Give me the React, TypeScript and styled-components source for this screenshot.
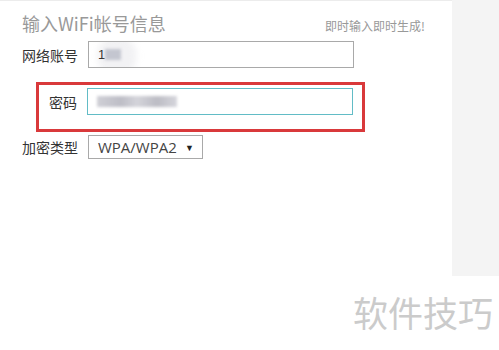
import React from 'react';
import styled, { createGlobalStyle } from 'styled-components';

const GlobalStyle = createGlobalStyle`
  html, body {
    margin: 0;
    padding: 0;
    background: #fff;
  }
  body {
    font-family: "Noto Sans CJK SC", "Liberation Sans", sans-serif;
    color: #333;
  }
`;

const Page = styled.div`
  position: relative;
  width: 499px;
  height: 350px;
  overflow: hidden;
`;

const Top = styled.div`
  display: flex;
  height: 276px;
`;

const Main = styled.main`
  width: 452px;
  box-sizing: border-box;
  padding: 10px 27px 0 22px;
  border-top: 1px solid #ececec;
`;

const SidePanel = styled.aside`
  flex: 1;
  background: #f4f4f4;
`;

const Header = styled.header`
  display: flex;
  justify-content: space-between;
  align-items: baseline;
  height: 24px;
`;

const Title = styled.h2`
  margin: 0;
  font-size: 18px;
  line-height: 24px;
  font-weight: normal;
  color: #999;
`;

const Hint = styled.span`
  font-size: 12px;
  color: #999;
`;

const Form = styled.div`
  display: flex;
  flex-direction: column;
  margin-top: 6px;
`;

const Row = styled.div<{ $highlight?: boolean }>`
  display: flex;
  align-items: center;
  ${({ $highlight }) =>
    $highlight
      ? `
    width: 329px;
    box-sizing: border-box;
    margin: 14px 0 0 14px;
    padding: 3px 8px 14px 0;
    border: 3px solid #d9393b;
  `
      : ''}
`;

const Label = styled.span<{ $width?: number }>`
  width: ${({ $width }) => $width ?? 56}px;
  margin-right: 10px;
  text-align: right;
  white-space: nowrap;
  font-size: 14px;
  color: #333;
  flex-shrink: 0;
`;

const Field = styled.div<{ $focus?: boolean }>`
  position: relative;
  display: flex;
  align-items: center;
  width: 266px;
  height: 27px;
  box-sizing: border-box;
  padding-left: 9px;
  border: 1px solid ${({ $focus }) => ($focus ? '#62bcc6' : '#a9a9a9')};
  background: #fff;
  overflow: hidden;
`;

const Char = styled.span`
  position: relative;
  font-family: "Liberation Sans", sans-serif;
  font-size: 13px;
  color: #333;
`;

const Smudge = styled.span<{ $w: number; $tone: string }>`
  position: relative;
  display: inline-block;
  width: ${({ $w }) => $w}px;
  height: 11px;
  background: ${({ $tone }) => $tone};
  filter: blur(1.5px);
`;

const Haze = styled.span`
  position: absolute;
  left: 8px;
  top: -6px;
  width: 40px;
  height: 40px;
  border-radius: 50%;
  background: rgba(236, 236, 240, 0.7);
  filter: blur(3px);
`;

const Select = styled.div`
  display: flex;
  align-items: center;
  justify-content: space-between;
  width: 115px;
  height: 24px;
  box-sizing: border-box;
  padding: 0 8px 0 9px;
  border: 1px solid #a9a9a9;
  font-family: "Open Sans", "Liberation Sans", sans-serif;
  font-size: 15px;
  color: #444;
`;

const Caret = styled.span`
  font-size: 9px;
  color: #222;
`;

const SelectRow = styled(Row)`
  margin-top: 3px;
`;

const Watermark = styled.div`
  position: absolute;
  left: 353px;
  top: 286px;
  font-size: 35px;
  color: #cbcbcb;
  white-space: nowrap;
`;

const App = (): JSX.Element => (
  <React.Fragment>
    <GlobalStyle />
    <Page>
      <Top>
        <Main>
          <Header>
            <Title>输入WiFi帐号信息</Title>
            <Hint>即时输入即时生成!</Hint>
          </Header>
          <Form>
            <Row>
              <Label>网络账号</Label>
              <Field>
                <Haze />
                <Char>1</Char>
                <Smudge $w={16} $tone="#c4c6d0" />
              </Field>
            </Row>
            <Row $highlight>
              <Label $width={38}>密码</Label>
              <Field $focus>
                <Smudge $w={80} $tone="linear-gradient(90deg,#cfcfd6,#bdbdc6 30%,#d4d4da 50%,#bcbcc4 75%,#d6d6dc)" />
              </Field>
            </Row>
            <SelectRow>
              <Label>加密类型</Label>
              <Select>
                <span>WPA/WPA2</span>
                <Caret>▼</Caret>
              </Select>
            </SelectRow>
          </Form>
        </Main>
        <SidePanel />
      </Top>
      <Watermark>软件技巧</Watermark>
    </Page>
  </React.Fragment>
);

export default App;
